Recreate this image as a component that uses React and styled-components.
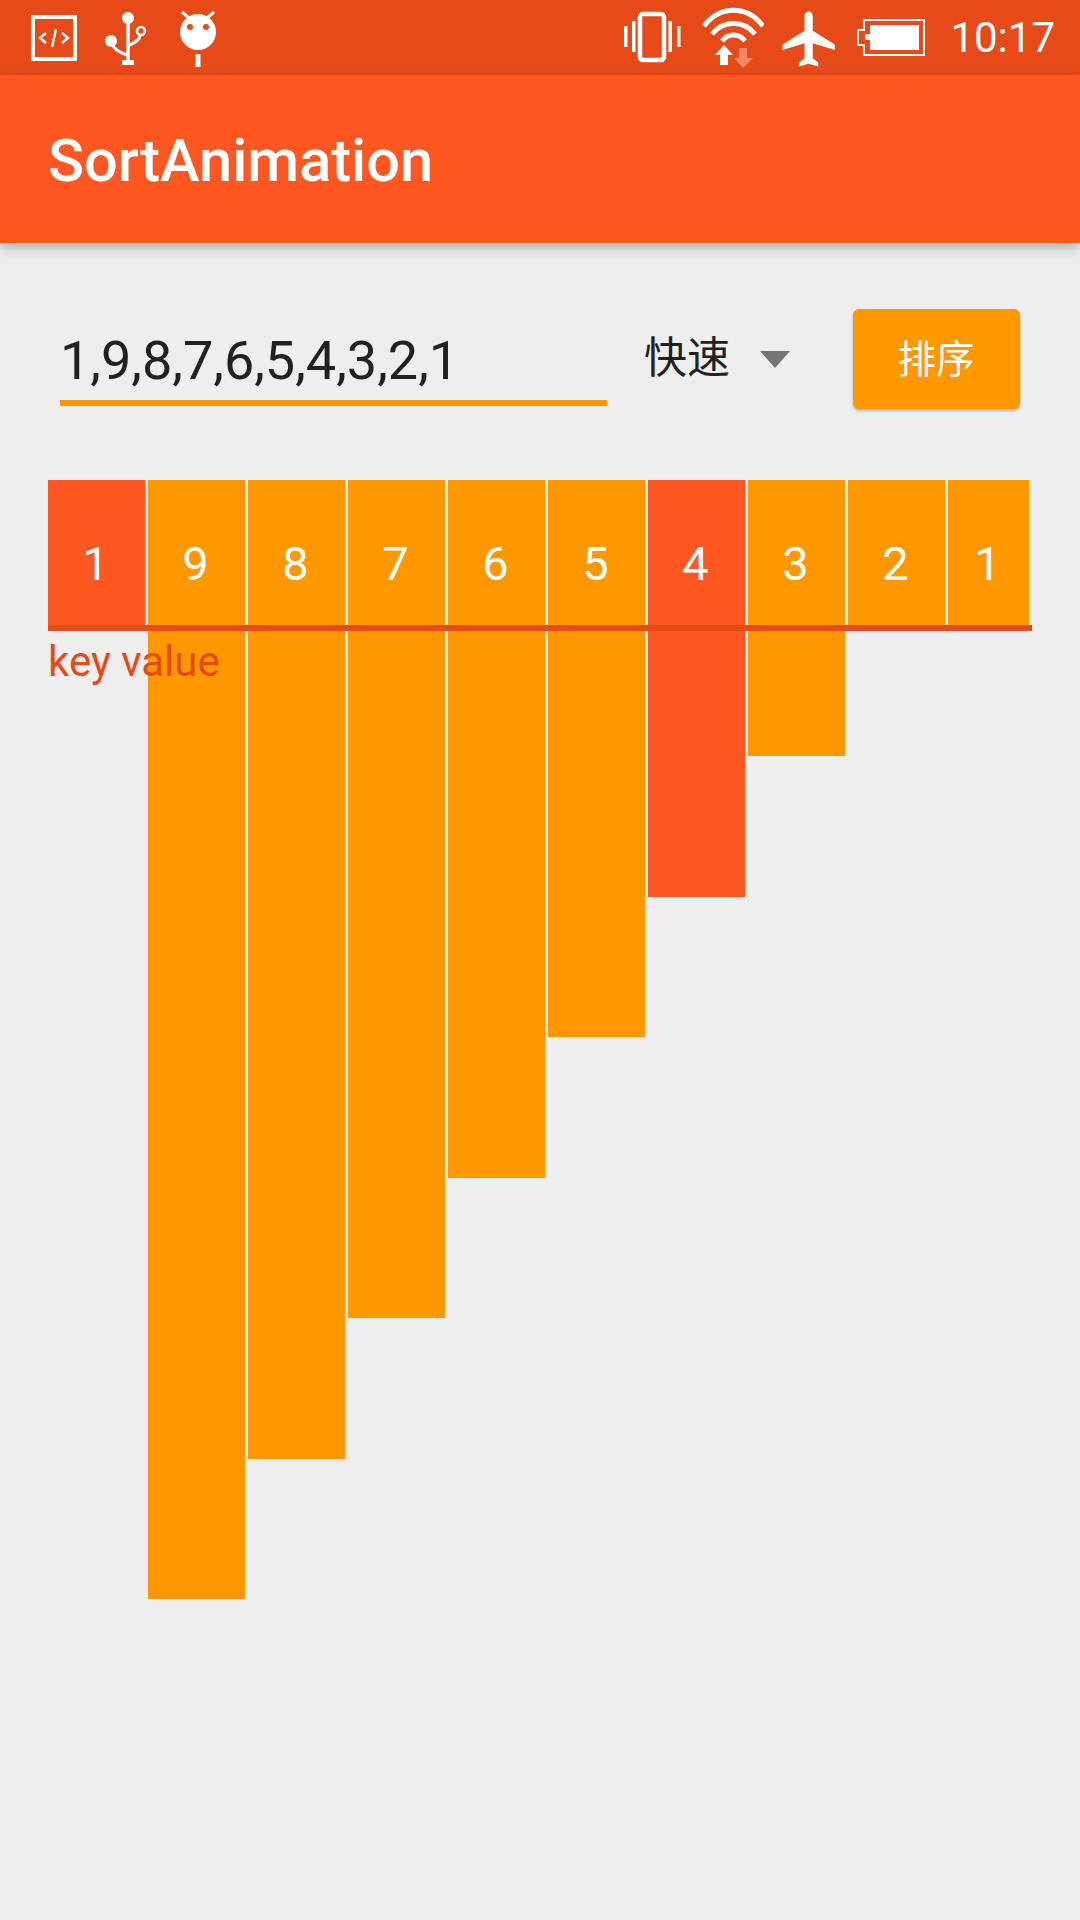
import React from 'react';
import styled, { createGlobalStyle } from 'styled-components';

const GlobalStyle = createGlobalStyle`
  html, body {
    margin: 0;
    padding: 0;
    background: #eeeeee;
  }
  * {
    box-sizing: border-box;
  }
`;

const Page = styled.div`
  position: relative;
  width: 1080px;
  height: 1920px;
  overflow: hidden;
  background: #eeeeee;
  font-family: Roboto, "Noto Sans CJK SC", sans-serif;
`;

const StatusBar = styled.div`
  height: 75px;
  background: #e64a19;
  display: flex;
  align-items: center;
  justify-content: space-between;
  padding: 0 25px 0 31px;
`;

const IconGroup = styled.div`
  display: flex;
  align-items: center;
  gap: ${({ $gap }) => $gap}px;
`;

const StatusIcon = styled.svg`
  display: block;
  flex-shrink: 0;
  height: 75px;
  width: ${({ $w }) => $w}px;
  margin-left: ${({ $ml }) => $ml || 0}px;
`;

const Clock = styled.span`
  color: #fff;
  font-size: 42px;
  line-height: 75px;
  margin-left: 25px;
`;

const AppBar = styled.header`
  position: relative;
  height: 168px;
  background: #ff5722;
  display: flex;
  align-items: center;
  padding: 4px 0 0 48px;
  box-shadow: 0 5px 10px rgba(0, 0, 0, 0.26);
`;

const Title = styled.h1`
  margin: 0;
  color: #fff;
  font-size: 59.5px;
  font-weight: 500;
`;

const Controls = styled.div`
  display: flex;
  align-items: flex-start;
  padding: 66px 0 0 60px;
  height: 237px;
`;

const InputBox = styled.div`
  width: 547px;
  height: 97px;
  border-bottom: 6px solid #ff9800;
  color: #212121;
  font-size: 54px;
  line-height: 91px;
  padding-top: 6px;
`;

const Spinner = styled.div`
  display: flex;
  align-items: center;
  margin-left: 37px;
  width: 209px;
  height: 90px;
  color: #212121;
  font-size: 43px;
`;

const Arrow = styled.span`
  width: 0;
  height: 0;
  margin: 10px 0 0 30px;
  border-left: 15px solid transparent;
  border-right: 15px solid transparent;
  border-top: 17px solid #757575;
`;

const SortButton = styled.div`
  width: 167px;
  height: 100px;
  border-radius: 6px;
  background: #ff9800;
  color: #fff;
  font-size: 38.500px;
  display: flex;
  align-items: center;
  justify-content: center;
  padding: 0 1px 7px 0;
  box-shadow: 0 2px 3px rgba(0, 0, 0, 0.25);
`;

const Chart = styled.div`
  position: relative;
  display: flex;
  align-items: flex-start;
  gap: 3px;
  margin-left: 48px;
  width: 984px;
`;

const Bar = styled.div`
  flex-shrink: 0;
  width: ${({ $last }) => ($last ? 81 : 97)}px;
  background: ${({ $active }) => ($active ? '#ff5722' : '#ff9800')};
  color: #fff;
  font-size: 47px;
  text-align: center;
  line-height: 50px;
  padding: 59px 2px 0 0;
`;

const KeyLine = styled.div`
  position: absolute;
  left: 0;
  top: 145px;
  width: 984px;
  height: 6px;
  background: #e64a19;
`;

const KeyLabel = styled.span`
  position: absolute;
  left: 0;
  top: 157px;
  color: #e64a19;
  font-size: 42px;
  line-height: 50px;
`;

const bars = [
  { value: 1, height: 145, active: true },
  { value: 9, height: 1119 },
  { value: 8, height: 979 },
  { value: 7, height: 838 },
  { value: 6, height: 698 },
  { value: 5, height: 557 },
  { value: 4, height: 417, active: true },
  { value: 3, height: 276 },
  { value: 2, height: 145 },
  { value: 1, height: 145 },
];

function App() {
  return (
    <Page>
      <GlobalStyle />
      <StatusBar>
        <IconGroup $gap={28}>
          <StatusIcon $w={46} viewBox="0 0 46 75">
            <rect x="2" y="17" width="42" height="42" fill="none" stroke="#fff" strokeWidth="4" />
            <path d="M15 33l-6 5 6 5M31 33l6 5-6 5M25 29l-4 18" fill="none" stroke="#fff" strokeWidth="2.4" />
          </StatusIcon>
          <StatusIcon $w={46} viewBox="0 0 46 75">
            <circle cx="23" cy="18" r="6" fill="#fff" />
            <circle cx="6" cy="41" r="6" fill="#fff" />
            <circle cx="36" cy="31" r="4" fill="none" stroke="#fff" strokeWidth="2.6" />
            <path d="M23 20v41" stroke="#fff" strokeWidth="3.4" fill="none" />
            <path d="M17 60h12v5H17z" fill="#fff" />
            <path d="M7 43c1 7 9 10 15 12M35 35c0 6-7 8-12 11" stroke="#fff" strokeWidth="3" fill="none" />
          </StatusIcon>
          <StatusIcon $w={38} viewBox="0 0 38 75">
            <circle cx="19" cy="32" r="18" fill="#fff" />
            <circle cx="11" cy="27" r="3" fill="#e64a19" />
            <circle cx="27" cy="27" r="3" fill="#e64a19" />
            <path d="M3 12l7 6M35 12l-7 6" stroke="#fff" strokeWidth="3" />
            <path d="M16.500 54h5v13h-5z" fill="#fff" />
          </StatusIcon>
        </IconGroup>
        <IconGroup $gap={0}>
          <StatusIcon $w={58} viewBox="0 0 58 75">
            <rect x="17" y="14" width="24" height="46" rx="3" fill="none" stroke="#fff" strokeWidth="4.500" />
            <path d="M1 26h3.500v21H1zM9 21h3.500v31H9zM45.500 21H49v31h-3.500zM54 26h3.500v21H54z" fill="#fff" />
          </StatusIcon>
          <StatusIcon $w={62} $ml={21} viewBox="0 0 62 75">
            <path d="M2 26C18 5 45 5 61 26" fill="none" stroke="#fff" strokeWidth="5" />
            <path d="M10 34C21 20 42 20 53 34" fill="none" stroke="#fff" strokeWidth="5" />
            <path d="M20 41C26 33 37 33 43 41" fill="none" stroke="#fff" strokeWidth="5" />
            <path d="M22 45l-9 10h5v10h8V55h5z" fill="#fff" />
            <path d="M37 48h8v10h6l-10 10-9-10h5z" fill="#fff" fillOpacity="0.35" />
          </StatusIcon>
          <StatusIcon $w={60} $ml={15} viewBox="0 0 60 75">
            <g transform="translate(-2 6) scale(2.75)">
              <path d="M21 16v-2l-8-5V3.500c0-.83-.67-1.500-1.500-1.500S10 2.670 10 3.500V9l-8 5v2l8-2.500V19l-2 1.500V22l3.500-1 3.500 1v-1.500L13 19v-5.500l8 2.500z" fill="#fff" />
            </g>
          </StatusIcon>
          <StatusIcon $w={68} $ml={18} viewBox="0 0 68 75">
            <path d="M1 30h6v-10h60v35H7V45H1z" fill="none" stroke="#fff" strokeWidth="2" />
            <path d="M13 25h49v25H13V40H8v-6h5z" fill="#fff" />
          </StatusIcon>
          <Clock>10:17</Clock>
        </IconGroup>
      </StatusBar>
      <AppBar>
        <Title>SortAnimation</Title>
      </AppBar>
      <Controls>
        <InputBox>1,9,8,7,6,5,4,3,2,1</InputBox>
        <Spinner>
          快速
          <Arrow />
        </Spinner>
        <SortButton>排序</SortButton>
      </Controls>
      <Chart>
        {bars.map((bar, i) => (
          <Bar key={i} $active={bar.active} $last={i === bars.length - 1} style={{ height: bar.height }}>
            {bar.value}
          </Bar>
        ))}
        <KeyLine />
        <KeyLabel>key value</KeyLabel>
      </Chart>
    </Page>
  );
}

export default App;
